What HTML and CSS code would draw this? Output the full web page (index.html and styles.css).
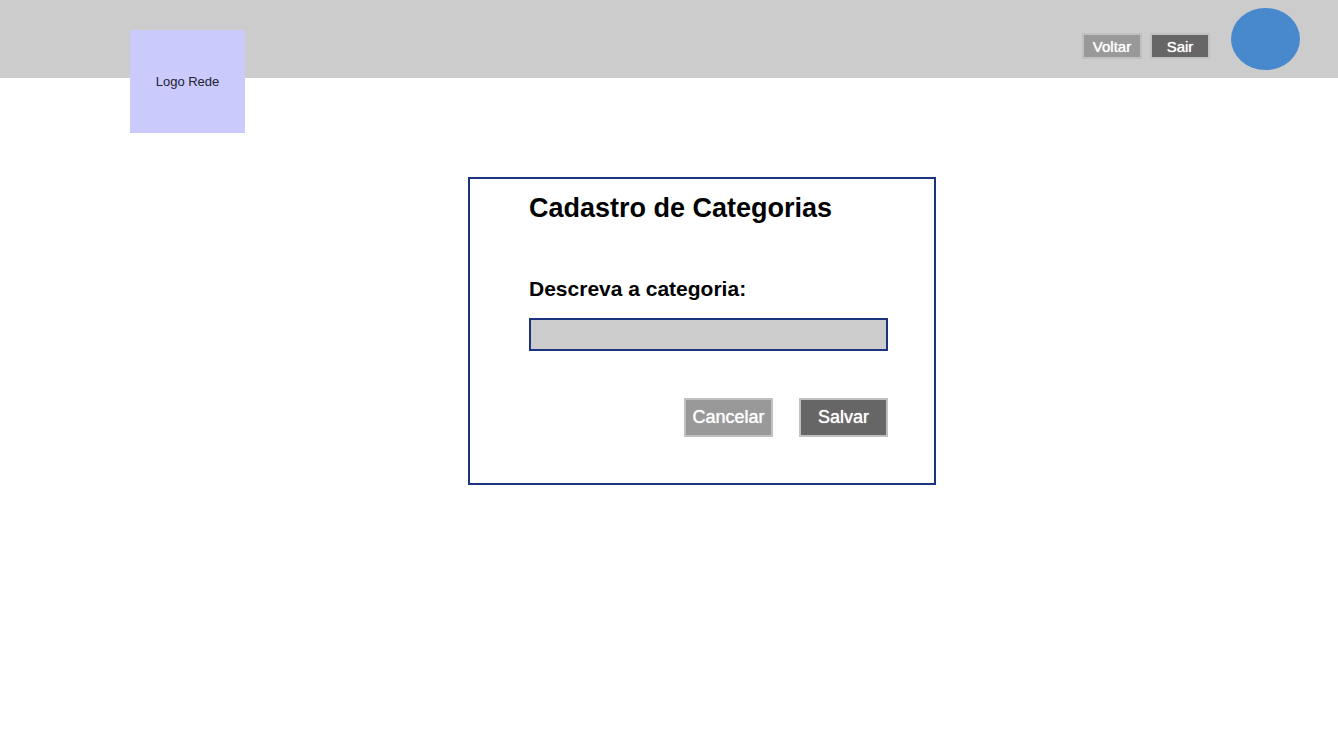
FILE: index.html
```html
<!DOCTYPE html>
<html lang="pt-BR">
<head>
<meta charset="utf-8">
<meta name="viewport" content="width=device-width, initial-scale=1">
<title>Cadastro de Categorias</title>
<link rel="stylesheet" href="styles.css">
</head>
<body>
<header class="topbar">
  <div class="logo">Logo Rede</div>
  <nav class="actions">
    <button type="button" class="btn btn-light btn-small">Voltar</button>
    <button type="button" class="btn btn-dark btn-small">Sair</button>
  </nav>
  <div class="avatar"></div>
</header>
<main class="content">
  <form class="card">
    <h1 class="title">Cadastro de Categorias</h1>
    <label class="label" for="categoria">Descreva a categoria:</label>
    <input class="field" id="categoria" type="text">
    <div class="buttons">
      <button type="button" class="btn btn-light">Cancelar</button>
      <button type="submit" class="btn btn-dark">Salvar</button>
    </div>
  </form>
</main>
</body>
</html>
```
FILE: styles.css
```css
* {
  box-sizing: border-box;
}

body {
  margin: 0;
  background: #fff;
  color: #000;
  font-family: "Liberation Sans", Arial, sans-serif;
}

.topbar {
  display: flex;
  align-items: flex-start;
  height: 78px;
  padding: 8px 38px 0 130px;
  background: #ccc;
}

.logo {
  display: flex;
  align-items: center;
  justify-content: center;
  width: 115px;
  height: 103px;
  margin-top: 22px;
  background: #cacafc;
  color: #223;
  font-size: 13px;
}

.actions {
  display: flex;
  gap: 8px;
  margin: 25px 21px 0 auto;
}

.avatar {
  width: 69px;
  height: 62px;
  border-radius: 50%;
  background: #4789cc;
}

.btn {
  width: 89px;
  height: 39px;
  padding: 0;
  border: 2px solid #c0c0c0;
  color: #fff;
  font-family: inherit;
  font-size: 18px;
  text-shadow: 0 0 1px #fff;
}

.btn-small {
  width: 60px;
  height: 26px;
  font-size: 15px;
}

.btn-light {
  background: #999;
}

.btn-dark {
  background: #666;
}

.content {
  display: flex;
  justify-content: center;
  padding: 99px 0 40px 66px;
}

.card {
  display: flex;
  flex-direction: column;
  width: 468px;
  padding: 11px 46px 46px 59px;
  border: 2px solid #1c3480;
}

.title {
  margin: 0;
  font-size: 27px;
  line-height: 36px;
}

.label {
  margin-top: 51px;
  font-size: 21px;
  font-weight: bold;
  line-height: 24px;
}

.field {
  height: 33px;
  margin-top: 17px;
  padding: 0 8px;
  border: 2px solid #1c3480;
  border-radius: 0;
  background: #ccc;
  font: inherit;
}

.buttons {
  display: flex;
  justify-content: flex-end;
  gap: 26px;
  margin-top: 47px;
}
```
